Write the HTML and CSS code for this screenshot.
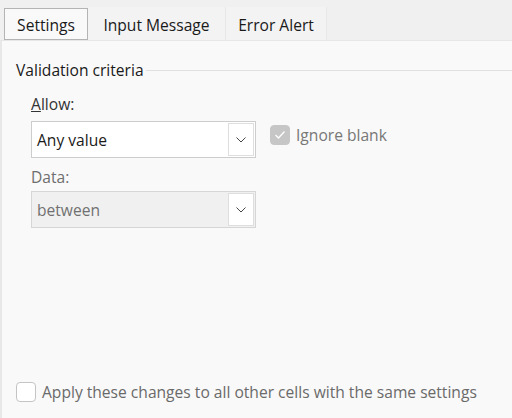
FILE: index.html
```html
<!DOCTYPE html>
<html>
<head>
<meta charset="utf-8">
<link rel="stylesheet" href="styles.css">
</head>
<body>
<div class="tabs">
  <div class="tab active">Settings</div>
  <div class="tab input">Input Message</div>
  <div class="tab error">Error Alert</div>
</div>
<div class="panel">
  <div class="legend"><span class="legend-text">Validation criteria</span><span class="legend-line"></span></div>
  <div class="criteria">
    <div class="label"><u>A</u>llow:</div>
    <div class="row">
      <div class="select">
        <span class="select-text">Any value</span>
        <span class="select-btn"><svg width="10" height="6" viewBox="0 0 10 6"><path d="M0.5 0.5 L5 5 L9.5 0.5" fill="none" stroke="#444" stroke-width="1"/></svg></span>
      </div>
      <div class="check-item disabled">
        <span class="box checked"><svg width="12" height="10" viewBox="0 0 12 10"><path d="M1.5 5 L4.5 8 L10.5 1.5" fill="none" stroke="#fff" stroke-width="1.3"/></svg></span>
        <span class="check-text">Ignore blank</span>
      </div>
    </div>
    <div class="label data">Data:</div>
    <div class="select disabled">
      <span class="select-text">between</span>
      <span class="select-btn"><svg width="10" height="6" viewBox="0 0 10 6"><path d="M0.5 0.5 L5 5 L9.5 0.5" fill="none" stroke="#444" stroke-width="1"/></svg></span>
    </div>
  </div>
  <div class="apply">
    <span class="box"></span>
    <span class="apply-text">Apply these changes to all other cells with the same settings</span>
  </div>
</div>
</body>
</html>
```

FILE: styles.css
```css
html, body {
  margin: 0;
  padding: 0;
  height: 100%;
}
body {
  background: #f0f0f0;
  font-family: "Open Sans", "Noto Sans", sans-serif;
  font-size: 15.6px;
  color: #1a1a1a;
  display: flex;
  flex-direction: column;
  overflow: hidden;
}
.tabs {
  display: flex;
  align-items: flex-end;
  height: 40px;
  padding-left: 4px;
  border-bottom: 1px solid #e6e6e6;
  box-sizing: content-box;
}
.tab {
  height: 33px;
  padding-top: 2px;
  display: flex;
  align-items: center;
  justify-content: center;
  box-sizing: border-box;
  background: #f3f3f3;
  border-right: 1px solid #e8e8e8;
  color: #1a1a1a;
}
.tab.active {
  width: 84px;
  height: 32px;
  padding-top: 1px;
  background: #f9f9f9;
  border: 1px solid #b4b4b4;
}
.tab.input { width: 138px; }
.tab.error { width: 101px; }
.panel {
  flex: 1;
  background: #f9f9f9;
  border-left: 2px solid #e8e8e8;
  display: flex;
  flex-direction: column;
  padding: 0 0 15px 14px;
}
.legend {
  display: flex;
  align-items: center;
  height: 20px;
  margin-top: 19px;
}
.legend-text {
  color: #1a1a1a;
  margin-right: 2px;
}
.legend-line {
  flex: 1;
  height: 1px;
  background: #e0e0e0;
}
.criteria {
  padding-left: 15px;
}
.label {
  height: 20px;
  line-height: 20px;
  margin-top: 14px;
  color: #333;
}
.label.data {
  margin-top: 9px;
  color: #6e6e6e;
}
.row {
  display: flex;
  align-items: flex-start;
  margin-top: 7px;
}
.select {
  width: 225px;
  height: 37px;
  box-sizing: border-box;
  border: 1px solid #cdcdcd;
  background: #fff;
  display: flex;
  align-items: stretch;
  padding: 1px;
}
.select.disabled {
  background: #f0f0f0;
  margin-top: 4px;
  border-color: #d6d6d6;
}
.select-text {
  flex: 1;
  display: flex;
  align-items: center;
  padding-left: 4px;
  color: #1a1a1a;
}
.select.disabled .select-text {
  color: #707070;
}
.select-btn {
  width: 26px;
  box-sizing: border-box;
  border: 1px solid #dedede;
  background: #fff;
  display: flex;
  align-items: center;
  justify-content: center;
}
.check-item {
  display: flex;
  align-items: center;
  margin-left: 14px;
  margin-top: 3px;
}
.box {
  width: 20px;
  height: 20px;
  box-sizing: border-box;
  border: 1px solid #c4c4c4;
  border-radius: 4px;
  background: #fff;
  display: flex;
  align-items: center;
  justify-content: center;
}
.box.checked {
  background: #c6c6c6;
  border-color: #c6c6c6;
}
.check-text {
  margin-left: 6px;
  color: #777;
}
.apply {
  margin-top: auto;
  display: flex;
  align-items: center;
}
.apply-text {
  margin-left: 6px;
  color: #6a6a6a;
}
```
